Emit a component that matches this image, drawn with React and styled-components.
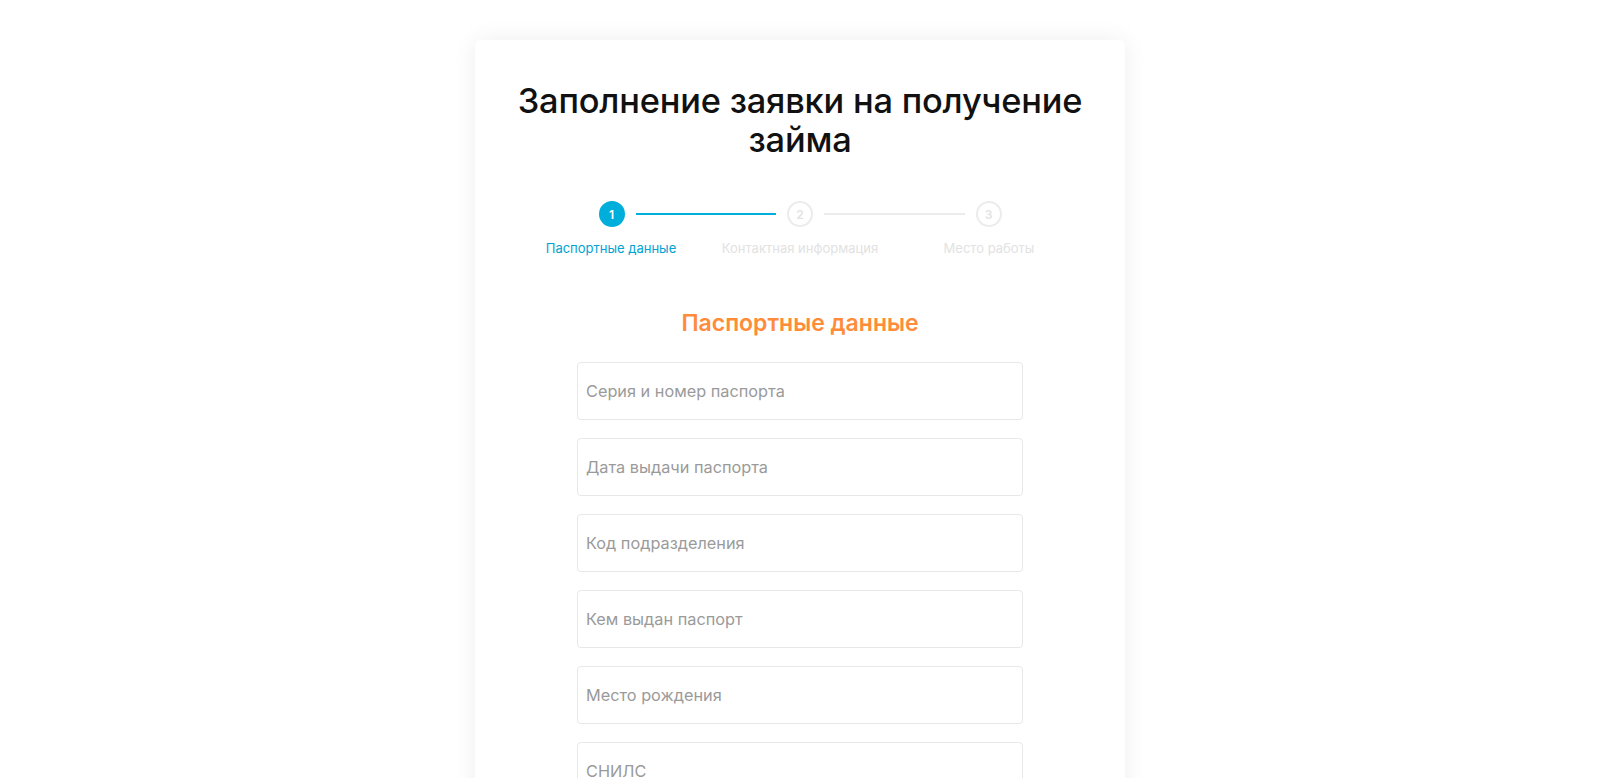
import React from 'react';
import styled, { createGlobalStyle } from 'styled-components';

const GlobalStyle = createGlobalStyle`
  * { box-sizing: border-box; }
  body {
    margin: 0;
    background: #fff;
    font-family: 'Inter', 'Noto Sans', sans-serif;
  }
`;

const Page = styled.div`
  display: flex;
  justify-content: center;
  padding-top: 40px;
  min-height: 778px;
  overflow: hidden;
`;

const Card = styled.div`
  width: 650px;
  min-height: 800px;
  background: #fff;
  border-radius: 6px;
  box-shadow: 0 0 24px rgba(0, 0, 0, 0.07);
  padding: 41px 40px 40px;
  display: flex;
  flex-direction: column;
  align-items: center;
`;

const Title = styled.h1`
  margin: 0;
  font-size: 34.4px;
  line-height: 39px;
  font-weight: 500;
  color: #111;
  text-align: center;
  letter-spacing: -0.2px;
  max-width: 580px;
`;

const Stepper = styled.div`
  margin-top: 42px;
  display: flex;
  flex-direction: column;
  align-items: center;
`;

const Track = styled.div`
  display: flex;
  align-items: center;
  width: 403px;
`;

const Circle = styled.div`
  width: 26px;
  height: 26px;
  border-radius: 50%;
  flex: none;
  display: flex;
  align-items: center;
  justify-content: center;
  font-size: 12px;
  font-weight: 600;
  color: ${p => (p.$active ? '#fff' : '#e3e3e3')};
  background: ${p => (p.$active ? '#00aedb' : '#fff')};
  border: 2px solid ${p => (p.$active ? '#00aedb' : '#ececec')};
`;

const Line = styled.div`
  flex: 1;
  height: 2px;
  margin: 0 11px;
  background: ${p => (p.$active ? '#00aedb' : '#ececec')};
`;

const Labels = styled.div`
  display: grid;
  grid-template-columns: repeat(3, 189px);
  margin-top: 13px;
`;

const Label = styled.span`
  text-align: center;
  font-size: 13px;
  white-space: nowrap;
  color: ${p => (p.$active ? '#00a3d4' : '#e2e2e2')};
`;

const SectionTitle = styled.h2`
  margin: 53px 0 0;
  font-size: 23px;
  font-weight: 600;
  color: #ff8c3a;
  text-align: center;
`;

const Fields = styled.div`
  margin-top: 25px;
  display: flex;
  flex-direction: column;
  gap: 18px;
  width: 446px;
`;

const Input = styled.input`
  width: 100%;
  height: 58px;
  border: 1px solid #e8e8e8;
  border-radius: 4px;
  padding: 0 8px;
  font-family: inherit;
  font-size: 16.3px;
  color: #333;
  outline: none;

  &::placeholder {
    color: #9a9a9a;
  }
`;

const steps = ['Паспортные данные', 'Контактная информация', 'Место работы'];

const fields = [
  'Серия и номер паспорта',
  'Дата выдачи паспорта',
  'Код подразделения',
  'Кем выдан паспорт',
  'Место рождения',
  'СНИЛС',
];

export default function App() {
  return (
    <>
      <GlobalStyle />
      <Page>
        <Card>
          <Title>Заполнение заявки на получение займа</Title>
          <Stepper>
            <Track>
              <Circle $active>1</Circle>
              <Line $active />
              <Circle>2</Circle>
              <Line />
              <Circle>3</Circle>
            </Track>
            <Labels>
              {steps.map((s, i) => (
                <Label key={s} $active={i === 0}>
                  {s}
                </Label>
              ))}
            </Labels>
          </Stepper>
          <SectionTitle>Паспортные данные</SectionTitle>
          <Fields>
            {fields.map(f => (
              <Input key={f} placeholder={f} />
            ))}
          </Fields>
        </Card>
      </Page>
    </>
  );
}
